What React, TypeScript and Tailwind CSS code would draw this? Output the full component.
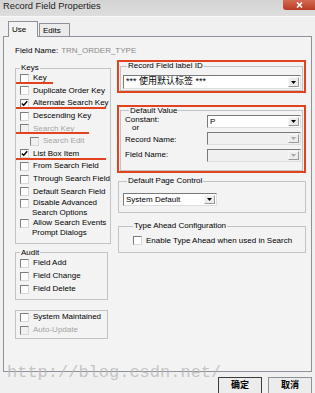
import React from "react";

type Item = {
  label: string;
  checked?: boolean;
  disabled?: boolean;
  indent?: boolean;
  mark?: string;
};

const keys: Item[] = [
  { label: "Key", mark: "w-[37px]" },
  { label: "Duplicate Order Key" },
  { label: "Alternate Search Key", checked: true, mark: "w-[90px]" },
  { label: "Descending Key" },
  { label: "Search Key", disabled: true, mark: "w-[73px]" },
  { label: "Search Edit", disabled: true, indent: true },
  { label: "List Box Item", checked: true, mark: "w-[90px]" },
  { label: "From Search Field" },
  { label: "Through Search Field" },
  { label: "Default Search Field" },
];

function Box({ checked, disabled }: { checked?: boolean; disabled?: boolean }) {
  return (
    <span
      className={`flex h-[9px] w-[9px] shrink-0 items-center justify-center border border-t-[#7d7d7d] border-l-[#7d7d7d] border-b-[#d8d8d8] border-r-[#d8d8d8] ${
        disabled ? "bg-[#f0f0f0]" : "bg-white"
      }`}
    >
      {checked && (
        <svg width="7" height="7" viewBox="0 0 7 7" fill="none">
          <path d="M0.8 3.4L2.7 5.3L6.2 1.2" stroke="#000" strokeWidth="1.4" />
        </svg>
      )}
    </span>
  );
}

function Row({ item, h = "h-[12.6px]" }: { item: Item; h?: string }) {
  return (
    <div
      className={`relative flex items-center gap-[4px] overflow-hidden whitespace-nowrap ${h} ${
        item.indent ? "pl-[14px]" : "pl-[4px]"
      } ${item.disabled ? "text-[#a3a3a3]" : "text-black"}`}
    >
      <Box checked={item.checked} disabled={item.disabled} />
      <span>{item.label}</span>
      {item.mark && (
        <span className={`absolute left-0 top-[10px] h-[2px] bg-[#e2421f] ${item.mark}`} />
      )}
    </div>
  );
}

function TwoLine({ a, b }: { a: string; b: string }) {
  return (
    <div className="flex items-start gap-[4px] pl-[4px] leading-[10px] whitespace-nowrap">
      <span className="mt-[1px]">
        <Box />
      </span>
      <div className="flex flex-col">
        <span>{a}</span>
        <span className="-ml-[1px]">{b}</span>
      </div>
    </div>
  );
}

function Legend({ children }: { children: React.ReactNode }) {
  return <legend className="ml-[4px] px-[1px] leading-[8px]">{children}</legend>;
}

function Select({
  value,
  disabled,
  className,
}: {
  value?: string;
  disabled?: boolean;
  className: string;
}) {
  return (
    <div
      className={`flex items-stretch border border-t-[#7a7a7a] border-l-[#7a7a7a] border-b-[#dedede] border-r-[#dedede] ${
        disabled ? "bg-[#f0f0f0]" : "bg-white"
      } ${className}`}
    >
      <div className="flex flex-1 items-center overflow-hidden whitespace-nowrap pl-[2px]">
        {value}
      </div>
      <div className="my-[1px] mr-[1px] flex w-[11px] items-center justify-center border border-t-[#f8f8f8] border-l-[#f8f8f8] border-b-[#9a9a9a] border-r-[#9a9a9a] bg-[#ececec]">
        <svg width="5" height="3" viewBox="0 0 5 3">
          <path d="M0 0H5L2.5 3Z" fill={disabled ? "#a8a8a8" : "#000"} />
        </svg>
      </div>
    </div>
  );
}

export default function App() {
  return (
    <div className="relative h-[393px] w-[315px] overflow-hidden bg-[#f0f0f0] text-[8px] text-black [font-family:'Liberation_Sans','Noto_Sans_CJK_SC',sans-serif]">
      {/* title bar */}
      <div className="flex h-[17px] items-start justify-between border-b border-[#f8f8f8] bg-gradient-to-b from-[#d3d3d3] to-[#dedede]">
        <span className="pl-[3px] text-[9.3px] leading-[12px] text-[#1c1c1c]">
          Record Field Properties
        </span>
        <div className="flex h-[10px] w-[32px] items-center justify-center rounded-bl-[3px] bg-gradient-to-b from-[#d46a52] to-[#b93a22]">
          <svg width="7" height="6" viewBox="0 0 7 6">
            <path d="M1 0.5L6 5.5M6 0.5L1 5.5" stroke="#fff" strokeWidth="1.6" />
          </svg>
        </div>
      </div>

      {/* tabs */}
      <div className="relative z-10 -mb-px flex items-end pl-[8px] pt-[4px]">
        <div className="flex h-[16px] w-[30px] items-start border border-b-0 border-[#8e9199] bg-[#f3f3f3] pl-[3px] pt-[2px]">
          Use
        </div>
        <div className="ml-[1px] flex h-[14px] w-[31px] items-start border border-[#8e9199] bg-[#ebebeb] pl-[3px] pt-[1px]">
          Edits
        </div>
      </div>

      {/* panel */}
      <div className="mx-[3px] h-[336px] border border-[#8e9199] bg-[#f3f3f3] pl-[11px]">
        <div className="mt-[9px] flex h-[10px] items-center gap-[3px] leading-[10px]">
          <span>Field Name:</span>
          <span className="text-[#8a8a8a]">TRN_ORDER_TYPE</span>
        </div>

        <div className="flex items-start gap-[9px]">
          {/* left column */}
          <div className="mt-[8px] flex w-[93px] flex-col">
            <fieldset className="border border-[#c3c3c3] pb-[5px]">
              <Legend>Keys</Legend>
              {keys.map((k) => (
                <Row key={k.label} item={k} />
              ))}
              <TwoLine a="Disable Advanced" b="Search Options" />
              <TwoLine a="Allow Search Events" b="Prompt Dialogs" />
            </fieldset>

            <fieldset className="mt-[5px] border border-[#c3c3c3] pb-[3px]">
              <Legend>Audit</Legend>
              <Row item={{ label: "Field Add" }} h="h-[13px]" />
              <Row item={{ label: "Field Change" }} h="h-[13px]" />
              <Row item={{ label: "Field Delete" }} h="h-[13px]" />
            </fieldset>

            <div className="mt-[10px] border border-[#c3c3c3] pb-[1px]">
              <Row item={{ label: "System Maintained" }} h="h-[13px]" />
              <Row item={{ label: "Auto-Update", disabled: true }} h="h-[13px]" />
            </div>
          </div>

          {/* right column */}
          <div className="mt-[4px] flex w-[189px] flex-col">
            <div className="border-2 border-[#e2421f]">
              <fieldset className="mx-[1px] border border-[#c3c3c3] pb-[1px] pl-[2px] pr-[1px]">
                <Legend>Record Field label ID</Legend>
                <Select
                  value="*** 使用默认标签 ***"
                  className="mt-[5px] h-[14px] text-[9px]"
                />
              </fieldset>
            </div>

            <div className="mt-[12px] border-2 border-[#e2421f]">
              <fieldset className="mx-[1px] border border-[#c3c3c3] pb-[8px] pl-[4px] pr-[1px]">
                <legend className="ml-[4px] px-[1px] leading-[7px]">Default Value</legend>
                <div className="flex">
                  <div className="flex w-[82px] flex-col leading-[8px]">
                    <span className="mt-[2px]">Constant:</span>
                    <span className="ml-[7px]">or</span>
                    <span className="mt-[4px]">Record Name:</span>
                    <span className="mt-[7px]">Field Name:</span>
                  </div>
                  <div className="flex flex-1 flex-col">
                    <Select value="P" className="mt-[1px] h-[13px]" />
                    <Select disabled className="mt-[4px] h-[13px]" />
                    <Select disabled className="mt-[4px] h-[13px]" />
                  </div>
                </div>
              </fieldset>
            </div>

            <fieldset className="ml-[1px] mt-[4px] border border-[#c3c3c3] pb-[6px] pl-[4px]">
              <Legend>Default Page Control</Legend>
              <Select value="System Default" className="mt-[8px] h-[13px] w-[94px]" />
            </fieldset>

            <fieldset className="ml-[1px] mt-[9px] border border-[#c3c3c3] pb-[5px] pl-[10px]">
              <Legend>Type Ahead Configuration</Legend>
              <div className="mt-[4px]">
                <Row item={{ label: "Enable Type Ahead when used in Search" }} h="h-[13px]" />
              </div>
            </fieldset>
          </div>
        </div>
      </div>

      {/* buttons */}
      <div className="mt-[5px] flex justify-end gap-[6px] pr-[3px] text-[9px] font-bold [font-family:'Noto_Sans_CJK_SC',sans-serif]">
        <div className="flex h-[18px] w-[44px] items-start justify-center border border-[#3c3c3c] bg-[#ececec] pt-[1px] leading-[12px]">
          确定
        </div>
        <div className="flex h-[18px] w-[44px] items-start justify-center border border-[#8e9199] bg-[#ececec] pt-[1px] leading-[12px]">
          取消
        </div>
      </div>

      {/* watermark */}
      <div className="pointer-events-none absolute left-[7px] top-[364px] whitespace-nowrap text-[17px] leading-[18px] text-[#b9b9b9]/80 [font-family:'Liberation_Mono',monospace]">
        http://blog.csdn.net/
      </div>
    </div>
  );
}
